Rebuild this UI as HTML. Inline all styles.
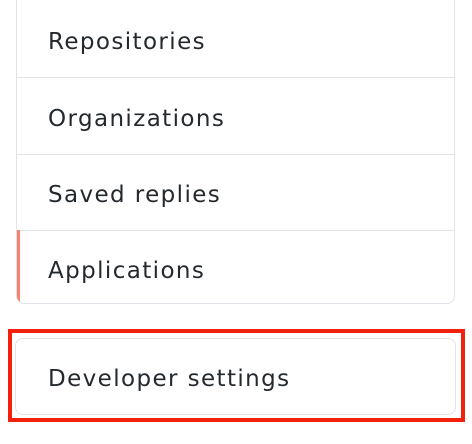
<!DOCTYPE html>
<html><head><style>
html,body{margin:0;padding:0;background:#fff;width:472px;height:444px;overflow:hidden;font-family:"DejaVu Sans","Liberation Sans",sans-serif;}
.box{position:absolute;left:16px;top:-10px;width:439px;height:314px;border:1px solid #e1e4e8;border-radius:0 0 8px 8px;box-sizing:border-box;overflow:hidden;}
.row{position:absolute;left:0;right:0;height:76px;border-bottom:1px solid #e1e4e8;font-size:23px;color:#24292e;letter-spacing:1.4px;}
.row span{position:absolute;left:31px;top:27px;line-height:28px;}
.sel{border-left:3px solid #f9826c;}
.red{position:absolute;left:8px;top:329px;width:457px;height:93px;border:4px solid #f3210b;box-sizing:border-box;}
.dev{position:absolute;left:15px;top:338px;width:441px;height:77px;border:1px solid #e1e4e8;border-radius:8px;box-sizing:border-box;font-size:23px;color:#24292e;letter-spacing:1.4px;}
.dev span{position:absolute;left:32px;top:26px;line-height:28px;}
</style></head><body>
<div class="box">
<div class="row" style="top:10px"><span>Repositories</span></div>
<div class="row" style="top:87px"><span>Organizations</span></div>
<div class="row" style="top:163px"><span>Saved replies</span></div>
<div class="row sel" style="top:239px;border-bottom:none;height:76px"><span style="left:28px">Applications</span></div>
</div>
<div class="red"></div>
<div class="dev"><span>Developer settings</span></div>
</body></html>
